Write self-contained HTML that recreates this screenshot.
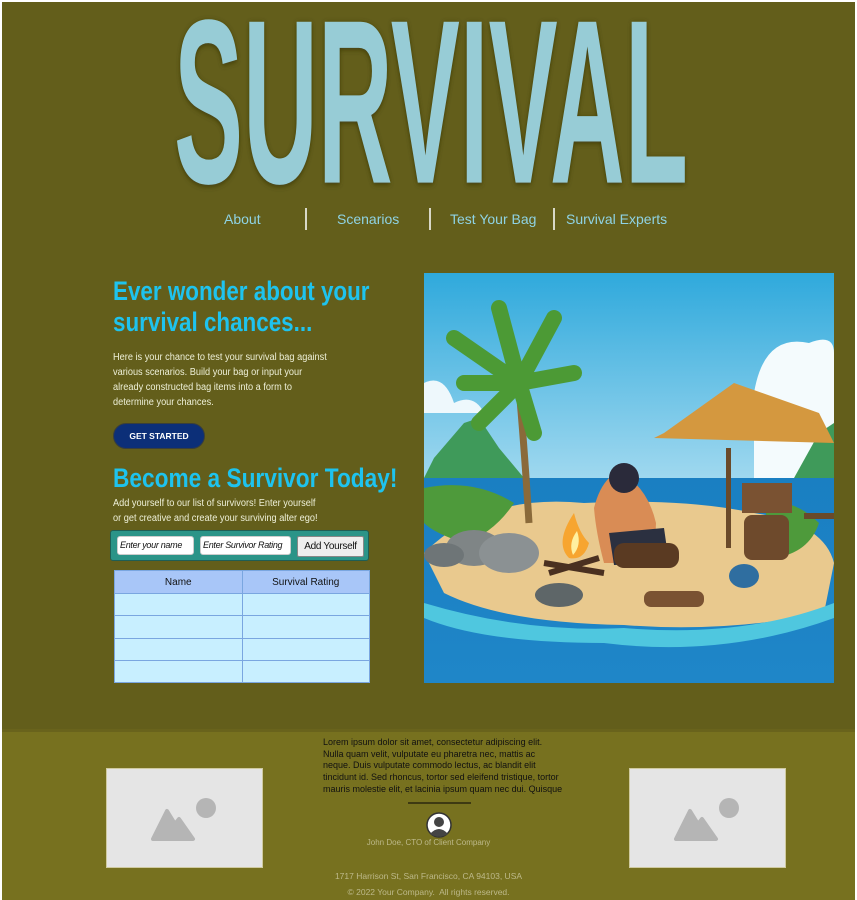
<!DOCTYPE html>
<html><head><meta charset="utf-8"><style>
*{box-sizing:border-box;margin:0;padding:0}
html,body{width:857px;height:900px;overflow:hidden;background:#fff}
.page{position:absolute;left:2px;top:2px;width:853px;height:898px;background:#635e1b;font-family:"Liberation Sans",sans-serif}
.nav a{position:absolute;top:209px;color:#8fd3e4;font-size:14px;text-decoration:none}
.sep{position:absolute;top:206px;width:2px;height:22px;background:#d8d8c8}
h1{position:absolute;left:111px;top:274px;color:#1ec3ee;font-size:27px;line-height:31px;font-weight:bold;white-space:nowrap;transform:scaleX(.83);transform-origin:0 0}
.p{position:absolute;color:#eef0d8;font-size:10px;line-height:15px;white-space:nowrap;transform:scaleX(.92);transform-origin:0 0}
.btn{position:absolute;left:111px;top:421px;width:92px;height:26px;border-radius:13px;background:#0c2f78;border:1px solid #3a3f3a;color:#fff;font-size:8.5px;font-weight:bold;text-align:center;line-height:24px}
.form{position:absolute;left:108px;top:528px;width:259px;height:31px;background:#2b9488;border:1px solid #1f5e55;border-radius:3px}
.in{position:absolute;top:5px;height:19px;background:#fff;border:1px solid #ccc;border-radius:3px;font-size:9px;font-style:italic;line-height:17px;padding-left:2px;color:#111;white-space:nowrap;overflow:hidden;letter-spacing:-0.3px}
.ab{position:absolute;left:186px;top:5px;width:67px;height:21px;background:#eee;border:1px solid #888;border-radius:2px;font-size:10px;text-align:center;line-height:19px;color:#111;letter-spacing:-0.3px}
table{position:absolute;left:112px;top:568px;width:256px;border-collapse:collapse;font-size:10px;table-layout:fixed}
td{border:1px solid #7aa6e0;height:22.3px;background:#c8efff;width:50%}
th{border:1px solid #7aa6e0;height:23px;background:#a8c6f8;font-weight:normal;color:#111;width:50%}
.foot{position:absolute;left:0;top:727px;width:853px;height:171px;background:#77711f;border-top:3px solid #69631c}
.ph{position:absolute;top:36px;width:157px;height:100px;background:#e5e5e5;border:1px solid #cfcaa0}
.lorem{position:absolute;left:321px;top:5px;width:240px;height:58px;overflow:hidden;font-size:9px;line-height:11.7px;color:#111}
.c{position:absolute;width:853px;text-align:center;color:#bdb98a}
</style></head><body><div class="page">
<svg style="position:absolute;left:0;top:0" width="853" height="200">
<defs><filter id="g"><feGaussianBlur stdDeviation="2"/></filter></defs>
<text x="172" y="123" font-family="Liberation Sans, sans-serif" font-weight="bold" font-size="158" textLength="514" lengthAdjust="spacingAndGlyphs" fill="#3d3a10" filter="url(#g)" transform="scale(1,1.48)">SURVIVAL</text>
<text x="172" y="122" font-family="Liberation Sans, sans-serif" font-weight="bold" font-size="158" textLength="514" lengthAdjust="spacingAndGlyphs" fill="#97ccd6" transform="scale(1,1.48)">SURVIVAL</text>
</svg>
<div class="nav"><a style="left:222px">About</a><span class="sep" style="left:303px"></span><a style="left:335px">Scenarios</a><span class="sep" style="left:427px"></span><a style="left:448px">Test Your Bag</a><span class="sep" style="left:551px"></span><a style="left:564px">Survival Experts</a></div>
<h1>Ever wonder about your<br>survival chances...</h1>
<div class="p" style="left:111px;top:348px">Here is your chance to test your survival bag against<br>various scenarios. Build your bag or input your<br>already constructed bag items into a form to<br>determine your chances.</div>
<div class="btn">GET STARTED</div>
<h1 style="top:461px;font-size:27px;transform:scaleX(.84)">Become a Survivor Today!</h1>
<div class="p" style="left:111px;top:494px">Add yourself to our list of survivors! Enter yourself<br>or get creative and create your surviving alter ego!</div>
<div class="form"><div class="in" style="left:6px;width:77px">Enter your name</div><div class="in" style="left:89px;width:91px">Enter Survivor Rating</div><div class="ab">Add Yourself</div></div>
<table><tr><th>Name</th><th>Survival Rating</th></tr><tr><td></td><td></td></tr><tr><td></td><td></td></tr><tr><td></td><td></td></tr><tr><td></td><td></td></tr></table>
<svg style="position:absolute;left:422px;top:271px" width="410" height="410" viewBox="0 0 410 410">
<defs><linearGradient id="sky" x1="0" y1="0" x2="0" y2="1"><stop offset="0" stop-color="#2fa9dc"/><stop offset="1" stop-color="#9fd8ef"/></linearGradient>
<linearGradient id="sea" x1="0" y1="0" x2="0" y2="1"><stop offset="0" stop-color="#1a7fc2"/><stop offset="1" stop-color="#1f86c8"/></linearGradient></defs>
<rect width="410" height="205" fill="url(#sky)"/>
<path d="M330 120 Q340 60 385 70 Q410 60 410 80 V205 H330Z" fill="#f4fbfd"/>
<path d="M0 110 Q20 100 30 130 Q50 120 60 140 H0Z" fill="#eef8fc"/>
<path d="M0 205 L10 185 L40 150 L55 145 L75 175 L100 205Z" fill="#3f9a5a"/>
<path d="M370 205 L395 160 L410 150 V205Z" fill="#3f9a5a"/>
<rect y="205" width="410" height="205" fill="url(#sea)"/>
<path d="M0 280 Q60 220 160 230 Q260 225 330 240 Q400 250 410 290 L400 340 Q300 360 200 352 Q80 350 20 320Z" fill="#e9c98e"/>
<path d="M0 330 Q100 360 200 355 Q320 365 410 330 V345 Q300 385 180 370 Q60 370 0 345Z" fill="#4fc7df"/>
<path d="M0 215 Q50 205 90 230 Q70 260 40 270 Q10 260 0 250Z" fill="#4e9a3b"/>
<path d="M340 230 Q370 225 395 250 Q385 280 350 285Z" fill="#4e9a3b"/>
<path d="M105 250 Q100 170 95 115" stroke="#8a6a3a" stroke-width="7" fill="none"/>
<path d="M95 110 L40 110 M95 110 L30 65 M95 110 L75 35 M95 110 L130 45 M95 110 L150 100 M95 110 L110 160 M95 110 L55 150" stroke="#4c9a35" stroke-width="16" stroke-linecap="round"/>
<path d="M230 165 L410 170 L395 140 L310 110 L240 160Z" fill="#d4983f"/>
<rect x="302" y="175" width="5" height="100" fill="#6a4a2a"/>
<rect x="380" y="240" width="90" height="6" fill="#6a4a2a"/>
<rect x="318" y="210" width="50" height="30" fill="#7a5232"/>
<rect x="320" y="242" width="45" height="45" rx="8" fill="#6e4a2c"/>
<path d="M170 235 Q175 215 185 205 L205 205 Q225 220 232 250 L230 290 L180 290 Q172 260 170 235Z" fill="#d98c55"/>
<circle cx="200" cy="205" r="15" fill="#2a2a3a"/>
<path d="M185 260 L240 255 L245 290 L190 292Z" fill="#2b3040"/>
<rect x="190" y="270" width="65" height="25" rx="10" fill="#5a3a22"/>
<path d="M145 285 Q130 270 150 240 Q155 260 165 270 Q160 288 145 285Z" fill="#f7a530"/>
<path d="M149 282 Q144 270 153 258 Q158 272 149 282Z" fill="#fff0a0"/>
<path d="M120 290 L180 300 M125 300 L175 285" stroke="#4a3020" stroke-width="6"/>
<ellipse cx="50" cy="275" rx="28" ry="18" fill="#7f8586"/>
<ellipse cx="85" cy="280" rx="30" ry="20" fill="#8b9193"/>
<ellipse cx="20" cy="282" rx="20" ry="12" fill="#6e7577"/>
<ellipse cx="135" cy="322" rx="24" ry="12" fill="#5e6668"/>
<ellipse cx="320" cy="303" rx="15" ry="12" fill="#2f6ea0"/>
<rect x="220" y="318" width="60" height="16" rx="7" fill="#7a5232"/>
</svg>
<div class="foot">
<div class="ph" style="left:104px"><svg width="155" height="98"><circle cx="99" cy="39" r="10" fill="#b5b5b5"/><path d="M46 70 L60 42 L68 55 L72 50 L86 70Z" fill="#b5b5b5" stroke="#b5b5b5" stroke-width="4" stroke-linejoin="round"/></svg></div>
<div class="ph" style="left:627px"><svg width="155" height="98"><circle cx="99" cy="39" r="10" fill="#b5b5b5"/><path d="M46 70 L60 42 L68 55 L72 50 L86 70Z" fill="#b5b5b5" stroke="#b5b5b5" stroke-width="4" stroke-linejoin="round"/></svg></div>
<div class="lorem">Lorem ipsum dolor sit amet, consectetur adipiscing elit. Nulla quam velit, vulputate eu pharetra nec, mattis ac neque. Duis vulputate commodo lectus, ac blandit elit tincidunt id. Sed rhoncus, tortor sed eleifend tristique, tortor mauris molestie elit, et lacinia ipsum quam nec dui. Quisque nec mauris sit amet elit iaculis pretium sit amet quis magna.</div>
<div style="position:absolute;left:406px;top:70px;width:63px;height:2px;background:#3e3a12"></div>
<svg style="position:absolute;left:424px;top:80px" width="26" height="26"><circle cx="13" cy="13" r="12" fill="#fff" stroke="#333" stroke-width="1.5"/><circle cx="13" cy="10" r="5" fill="#444"/><path d="M4 22 Q13 12 22 22 Q13 27 4 22Z" fill="#444"/></svg>
<div class="c" style="top:106px;font-size:8px">John Doe, CTO of Client Company</div>
<div class="c" style="top:139px;font-size:8.5px">1717 Harrison St, San Francisco, CA 94103, USA</div>
<div class="c" style="top:155px;font-size:8.5px">© 2022 Your Company.&nbsp; All rights reserved.</div>
</div>
</div></body></html>
